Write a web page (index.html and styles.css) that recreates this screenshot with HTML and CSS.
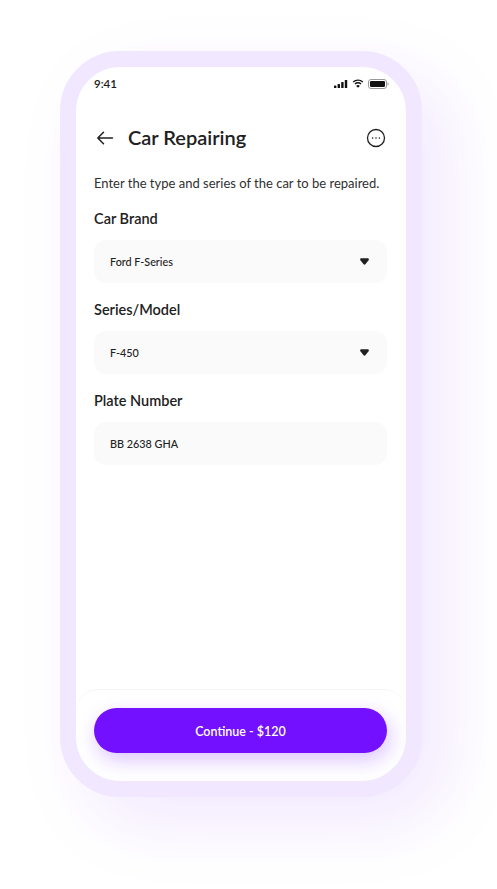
FILE: index.html
```html
<!DOCTYPE html>
<html lang="en">
<head>
    <meta charset="UTF-8">
    <meta name="viewport" content="width=device-width, initial-scale=1.0">
    <title>Car Repairing</title>
    <link rel="stylesheet" href="styles.css">
</head>
<body>
    <div class="phone">
        <div class="status-bar">
            <span class="time">9:41</span>
            <div class="status-icons">
                <svg width="14" height="8" viewBox="0 0 14 8"><rect x="0" y="5.5" width="2.4" height="2.5" rx=".6"/><rect x="3.6" y="4" width="2.4" height="4" rx=".6"/><rect x="7.2" y="2" width="2.4" height="6" rx=".6"/><rect x="10.8" y="0" width="2.4" height="8" rx=".6"/></svg>
                <svg width="12" height="9" viewBox="0 0 12 9"><path d="M6 1.800c1.700 0 3.200.6 4.400 1.700l.9-1A7.800 7.800 0 0 0 6 .4 7.800 7.800 0 0 0 .7 2.500l.9 1A6.400 6.400 0 0 1 6 1.800z"/><path d="M6 4.400c1 0 1.900.4 2.600 1l.9-1A5.200 5.200 0 0 0 6 3a5.200 5.200 0 0 0-3.500 1.400l.9 1c.7-.6 1.600-1 2.600-1z"/><path d="M6 8.800 7.800 6.900A2.600 2.600 0 0 0 6 6.100c-.7 0-1.300.3-1.800.8z"/></svg>
                <svg width="21" height="10" viewBox="0 0 21 10"><rect x=".5" y=".5" width="18" height="9" rx="2.500" fill="none" stroke="#9a9a9a"/><rect x="2" y="2" width="15" height="6" rx="1.200"/><path d="M19.500 3.500v3c.7-.2 1.200-.8 1.200-1.500s-.5-1.300-1.200-1.500z" fill="#9a9a9a"/></svg>
            </div>
        </div>

        <div class="header">
            <svg class="back-icon" width="20" height="16" viewBox="0 0 20 16"><path d="M16.500 8H1.800M7.500 2.200 1.800 8l5.700 5.800" fill="none" stroke="#212121" stroke-width="1.500" stroke-linecap="round" stroke-linejoin="round"/></svg>
            <h1 class="title">Car Repairing</h1>
            <svg class="more-icon" width="20" height="20" viewBox="0 0 20 20"><circle cx="10" cy="10" r="8.500" fill="none" stroke="#212121" stroke-width="1.300"/><circle cx="6.600" cy="10" r=".8" fill="#212121"/><circle cx="10" cy="10" r=".8" fill="#212121"/><circle cx="13.400" cy="10" r=".8" fill="#212121"/></svg>
        </div>

        <div class="content">
            <p class="intro">Enter the type and series of the car to be repaired.</p>

            <div class="field">
                <div class="field-label">Car Brand</div>
                <div class="field-box">
                    <span>Ford F-Series</span>
                    <svg class="caret" width="9" height="7" viewBox="0 0 9 7"><path d="M1.500.2h6C8.700.2 9.200 1.300 8.600 2.200L5.400 6.300c-.5.600-1.300.6-1.800 0L.4 2.200C-.2 1.300.3.200 1.500.2z"/></svg>
                </div>
            </div>

            <div class="field">
                <div class="field-label">Series/Model</div>
                <div class="field-box">
                    <span>F-450</span>
                    <svg class="caret" width="9" height="7" viewBox="0 0 9 7"><path d="M1.500.2h6C8.700.2 9.200 1.300 8.600 2.200L5.400 6.300c-.5.600-1.300.6-1.800 0L.4 2.200C-.2 1.300.3.200 1.500.2z"/></svg>
                </div>
            </div>

            <div class="field">
                <div class="field-label">Plate Number</div>
                <div class="field-box">
                    <span>BB 2638 GHA</span>
                </div>
            </div>
        </div>

        <div class="footer">
            <button class="continue-btn">Continue - $120</button>
        </div>
    </div>
</body>
</html>
```

FILE: styles.css
```css
html, body {
    margin: 0;
    height: 889px;
    overflow: hidden;
}
body {
    background: #fff;
    font-family: "Lato", "Noto Sans", sans-serif;
    color: #212121;
    padding: 51px 0 0 60px;
    box-sizing: border-box;
}
.phone {
    width: 362px;
    height: 746px;
    box-sizing: border-box;
    border: 16px solid #f1e7ff;
    border-radius: 60px;
    background: #fff;
    background-clip: padding-box;
    display: flex;
    flex-direction: column;
    box-shadow: 26px 26px 70px rgba(123, 31, 255, 0.1);
    overflow: hidden;
}
.status-bar {
    display: flex;
    justify-content: space-between;
    align-items: center;
    height: 33px;
    padding: 0 18px;
}
.time {
    font-size: 11.5px;
    font-weight: 600;
    color: #1a1a1a;
}
.status-icons {
    display: flex;
    align-items: center;
    gap: 4px;
    margin-right: -1px;
}
.status-icons svg {
    fill: #111;
    display: block;
}
.header {
    display: flex;
    align-items: center;
    margin-top: 21px;
    height: 34px;
    padding: 0 20px;
}
.back-icon {
    display: block;
    flex: none;
}
.title {
    margin: 0 0 2px 12px;
    flex: 1;
    font-size: 20px;
    font-weight: 600;
    color: #212121;
}
.more-icon {
    display: block;
    flex: none;
}
.content {
    flex: 1;
    padding: 0 19px 0 18px;
}
.intro {
    margin: 18px 0 16px;
    font-size: 13px;
    line-height: 20px;
    color: #303030;
    white-space: nowrap;
}
.field + .field {
    margin-top: 17px;
}
.field-label {
    font-size: 14.5px;
    font-weight: 600;
    line-height: 20px;
    margin-bottom: 11px;
}
.field-box {
    height: 43px;
    box-sizing: border-box;
    background: #fafafa;
    border-radius: 12px;
    display: flex;
    align-items: center;
    justify-content: space-between;
    padding: 0 18px 0 16px;
    font-size: 10.8px;
    font-weight: 500;
    color: #212121;
}
.caret {
    fill: #212121;
    display: block;
}
.footer {
    height: 92px;
    box-sizing: border-box;
    border-top: 1px solid #f5f5f5;
    border-radius: 22px 22px 0 0;
    padding: 18px 19px 0 18px;
}
.continue-btn {
    display: block;
    width: 100%;
    height: 45px;
    padding: 1px 0 0;
    border: 0;
    border-radius: 23px;
    background: #7210ff;
    color: #fff;
    font-family: inherit;
    font-size: 12.5px;
    font-weight: 600;
    box-shadow: 3px 7px 20px rgba(114, 16, 255, 0.25);
}
```
